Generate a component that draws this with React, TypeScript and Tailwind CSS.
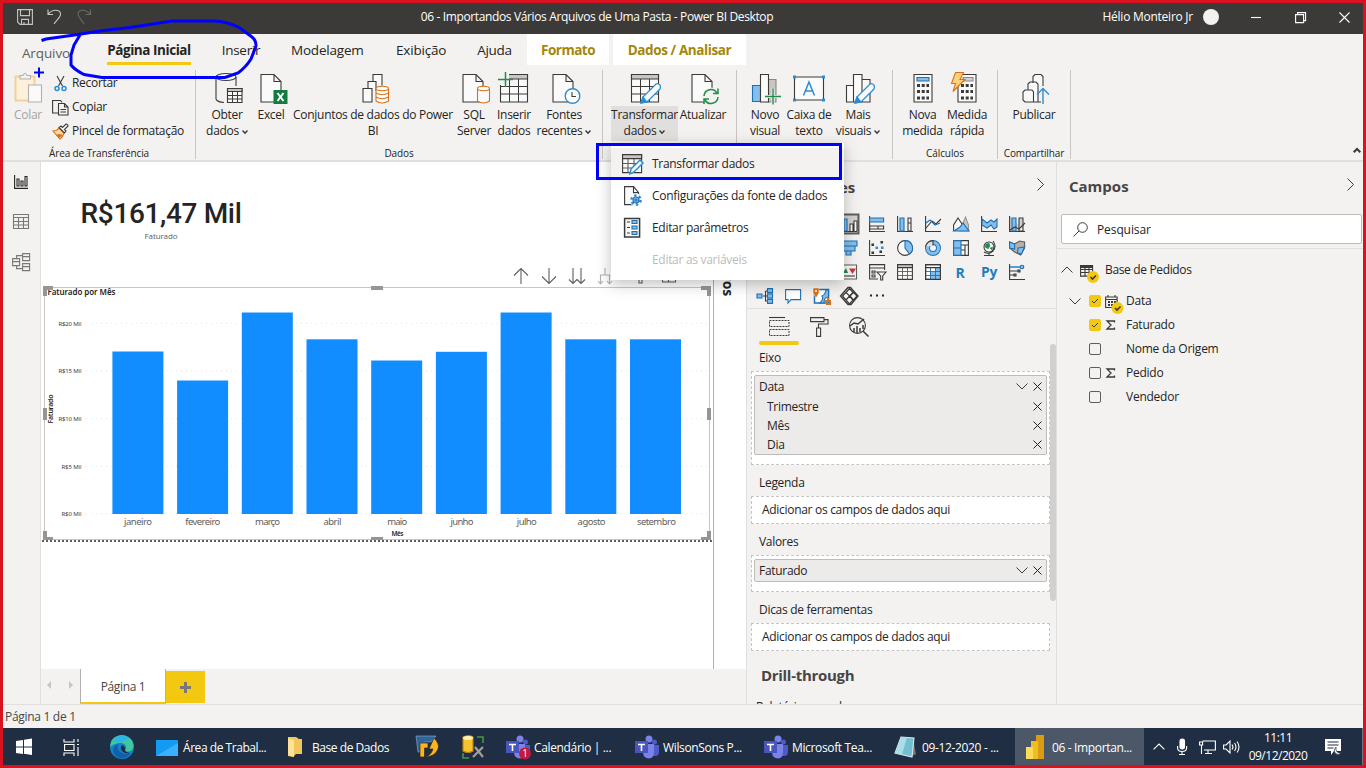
import React from "react";

const INK = "#3b3a39";
const BLUE = "#2a8dd4";
const DEEP = "#1f6fb2";
const FILL = "#83beec";

type SvgProps = { box: string; className: string; children: React.ReactNode };

function Svg({ box, className, children }: SvgProps) {
  return (
    <svg viewBox={box} className={`block shrink-0 overflow-visible ${className}`} fill="none" stroke={INK} strokeWidth={1.1}>
      {children}
    </svg>
  );
}

/* ---------- shared icon parts ---------- */

const FileShape = () => <path d="M3.500 3.500h13l7 7v20.500h-20zM16.500 3.500v7h7" fill="#fafafa" />;
const Pencil = ({ x, y }: { x: number; y: number }) => (
  <g transform={`translate(${x} ${y})`}>
    <path d="M0 20 2 14 15 1q2-1 4 1 1 2 0 4L6 19z" fill="#fafafa" stroke={BLUE} strokeWidth={1.300} />
    <path d="M0 20 2 14 6 19z" fill={BLUE} stroke={BLUE} />
  </g>
);
const Chevron = () => (
  <svg viewBox="0 0 6 6" className="ml-[3px] inline-block size-[6px]" fill="none" stroke={INK} strokeWidth={1.5}>
    <path d="M.5 1.500 3 4.200 5.500 1.500" />
  </svg>
);
const Close = () => (
  <Svg box="0 0 9 9" className="size-[9px]">
    <path d="M.5.5l8 8M8.500.5l-8 8" strokeWidth={1} stroke="#252423" />
  </Svg>
);
const Expand = () => (
  <Svg box="0 0 12 7" className="h-[7px] w-[12px]">
    <path d="M.5.5 6 6 11.500.5" strokeWidth={1} />
  </Svg>
);

/* ---------- ribbon ---------- */

type BigProps = { w: string; label: string[]; menu?: boolean; active?: boolean; faded?: boolean; children: React.ReactNode };

function Big({ w, label, menu, active, faded, children }: BigProps) {
  return (
    <div className={`flex flex-col items-center ${w}`}>
      <Svg box="0 0 34 35" className="h-[35px] w-[34px]">{children}</Svg>
      <div className={`h-[35px] w-full pt-px text-center leading-4 ${active ? "bg-[#e1dfdd]" : ""} ${faded ? "text-[#a6a4a2]" : ""}`}>
        {label.map((l, i) => (
          <div key={l} className="-mx-4 whitespace-nowrap">
            {l}
            {menu && i === label.length - 1 ? <Chevron /> : null}
          </div>
        ))}
      </div>
    </div>
  );
}

function Group({ w, label, pad, children }: { w: string; label: string; pad: string; children: React.ReactNode }) {
  return (
    <section className={`flex h-[89px] shrink-0 flex-col justify-between border-r border-[#c8c6c4] pt-px ${w}`}>
      <div className={`flex ${pad}`}>{children}</div>
      <div className="text-center text-[10px] leading-[11px] tracking-[-0.1px]">{label}</div>
    </section>
  );
}

const Grid = ({ x }: { x: number }) => (
  <g transform={`translate(${x} 0)`}>
    <path d="M3.500 3.500h27v27.500h-27z" fill="#fafafa" />
    <path d="M3.500 3.500h27v4.500h-27z" fill="#c8c6c4" />
    <path d="M3.500 15.500h27M3.500 23h27M12.500 8v23M21.500 8v23" strokeWidth={1} />
  </g>
);

function SmallAction({ label, children }: { label: string; children: React.ReactNode }) {
  return (
    <div className="flex h-6 items-center gap-[3px]">
      <Svg box="0 0 17 17" className="size-[17px]">{children}</Svg>
      <span className="whitespace-nowrap">{label}</span>
    </div>
  );
}

function Ribbon() {
  return (
    <div className="flex h-[97px] border-b-2 border-[#e1dfdd] pt-[5px] text-[12px] tracking-[-0.3px]">
      <Group w="w-[193px]" label="Área de Transferência" pad="pl-[8px]">
        <Big w="w-[34px]" label={["Colar"]} faded>
          <g transform="translate(4 0)">
            <path d="M.5 5.500h19v24H.5z" fill="#fdf1dc" stroke="#f3cf9c" strokeWidth={2} />
            <path d="M5 8V4.500h3Q10 0 12 4.500h3.500V8z" fill="#f3f2f1" stroke="#b3b0ad" />
            <path d="M13.500 14h13v17h-13z" fill="#fafafa" stroke="#b3b0ad" />
          </g>
        </Big>
        <div className="ml-[7px] flex flex-col">
          <SmallAction label="Recortar">
            <path d="M5 1l5.500 10M12 1 6.500 11" />
            <circle cx="5" cy="13.500" r="2" stroke={BLUE} strokeWidth={1.500} /><circle cx="12" cy="13.500" r="2" stroke={BLUE} strokeWidth={1.500} />
          </SmallAction>
          <SmallAction label="Copiar">
            <path d="M6 14H.6V1.500h8l1.500 2M6.500 4.500h6l3.500 3.500v8H6.500zM12.500 4.500V8H16M8.500 10.500H14M8.500 13H14" />
          </SmallAction>
          <SmallAction label="Pincel de formatação">
            <path d="M1 8q4 0 6-3l5 5q-1 4-4 6z" fill="#fbd9a4" stroke="#d8731c" />
            <path d="M4 12l3 3 4-3-4-1z" fill="#d8731c" stroke="none" />
            <path d="M7 4.500 12.500 10l1.500-2-1.500-1.500L16 3q0-2-2-2l-3.500 3.500L9 3z" fill="#fafafa" />
          </SmallAction>
        </div>
      </Group>
      <Group w="w-[407px]" label="Dados" pad="pl-[9px]">
        <Big w="w-[44px]" label={["Obter", "dados"]} menu>
          <path d="M6 6v22q1 3 8 3.500M26 6v9" />
          <ellipse cx="16" cy="6" rx="10" ry="3.500" fill="#fafafa" />
          <path d="M17.500 17.500h14.500v14H17.500z" fill="#fafafa" /><path d="M17.500 17.500h14.500v3H17.500z" fill="#c8c6c4" />
          <path d="M17.500 24.500h14.500M17.500 28h14.500M22.500 20.500v11M27.500 20.500v11" strokeWidth={1} />
        </Big>
        <Big w="w-[44px]" label={["Excel"]}>
          <g transform="translate(3.500 0)"><FileShape /></g>
          <path d="M19.500 19h14v14h-14z" fill="#107c41" stroke="none" />
          <path d="M23.500 22l6 8M29.500 22l-6 8" stroke="#fff" strokeWidth={2} />
        </Big>
        <Big w="w-[160px]" label={["Conjuntos de dados do Power", "BI"]}>
          <path d="M7 31h9V17.500H7zM12 17.500v-7h8V20M17 10.500v-7h9v11" fill="#fafafa" />
          <path d="M20 18v12q6 4 12.500 0V18" fill="#fafafa" stroke="#d8731c" /><ellipse cx="26.200" cy="17.500" rx="6.200" ry="2.200" fill="#fafafa" stroke="#d8731c" />
          <path d="M20 22q6 3.500 12.500 0M20 26q6 3.500 12.500 0" stroke="#d8731c" />
        </Big>
        <Big w="w-[42px]" label={["SQL", "Server"]}>
          <g transform="translate(2.500 0)"><FileShape /></g>
          <path d="M20.500 18v12q6 4 12 0V18" fill="#fafafa" stroke="#d8731c" /><ellipse cx="26.500" cy="17.500" rx="6" ry="2.200" fill="#fafafa" stroke="#d8731c" />
        </Big>
        <Big w="w-[38px]" label={["Inserir", "dados"]}>
          <Grid x={0} />
          <path d="M1 1h11v13H1z" fill="#f3f2f1" stroke="none" />
          <path d="M1 8.500h15M8.500 1v15" stroke="#218d4a" strokeWidth={1.500} />
        </Big>
        <Big w="w-[62px]" label={["Fontes", "recentes"]} menu>
          <g transform="translate(2.500 0)"><FileShape /></g>
          <circle cx="25.500" cy="25" r="7.300" fill="#fff" stroke={BLUE} strokeWidth={1.400} /><path d="M25 21v4.500h4" />
        </Big>
      </Group>
      <Group w="w-[134px]" label="" pad="pl-[8px]">
        <Big w="w-[67px]" label={["Transformar", "dados"]} menu active>
          <Grid x={0} /><Pencil x={13} y={12} />
        </Big>
        <Big w="w-[50px]" label={["Atualizar"]}>
          <g transform="translate(2.500 0)"><FileShape /></g>
          <circle cx="25" cy="25.500" r="9" fill="#f3f2f1" stroke="none" />
          <path d="M18 25a7 7 0 0 1 13-3M32 26a7 7 0 0 1-13 3M32 17.500v5h-5M18 33v-5h5" stroke="#218d4a" strokeWidth={1.500} />
        </Big>
      </Group>
      <Group w="w-[156px]" label="" pad="pl-[7px]">
        <Big w="w-[42px]" label={["Novo", "visual"]}>
          <path d="M4.500 14.500h8v16h-8z" fill={FILL} stroke={DEEP} /><path d="M20 8.500h8V31h-8z" fill="#c8c6c4" stroke="#8a8886" />
          <path d="M12.500 3.500h8V31h-8z" fill="#fafafa" /><path d="M17 25.500h16M25 17.500v16" stroke="#f3f2f1" strokeWidth={3} /><path d="M17 25.500h16M25 17.500v16" stroke="#218d4a" strokeWidth={1.400} />
        </Big>
        <Big w="w-[46px]" label={["Caixa de", "texto"]}>
          <path d="M2.500 6h29v23h-29z" fill="#fafafa" />
          <path d="M1 4.500h3v3H1zM30 4.500h3v3h-3zM1 27.500h3v3H1zM30 27.500h3v3h-3z" fill={BLUE} stroke="none" />
          <path d="M11.500 24.500 17 11l5.500 13.500M13.500 20h7" stroke={BLUE} strokeWidth={1.500} />
        </Big>
        <Big w="w-[52px]" label={["Mais", "visuais"]} menu>
          <path d="M5.500 14.500h7V31h-7zM21 8.500h8V31h-8zM12.500 3.500H21V31h-8.500z" fill="#fafafa" /><Pencil x={14} y={12} />
        </Big>
      </Group>
      <Group w="w-[105px]" label="Cálculos" pad="pl-[8px]">
        <Big w="w-[43px]" label={["Nova", "medida"]}>
          <path d="M8 3.500h18V31H8z" fill="#fafafa" /><path d="M11 6.500h12V10H11z" fill={FILL} stroke={DEEP} />
          <path d="M11 14.500h12M11 20.500h12M11 27h12" strokeWidth={3} strokeDasharray="3 1.700" />
        </Big>
        <Big w="w-[46px]" label={["Medida", "rápida"]}>
          <path d="M8 3.500h18V31H8z" fill="#fafafa" /><path d="M13 6.500h10V10H13z" fill="#d2d0ce" stroke="#8a8886" />
          <path d="M11 14.500h12M11 20.500h12M11 27h12" strokeWidth={3} strokeDasharray="3 1.700" />
          <path d="M5.500 1.500h8L10 8.500h5L3 20.500l2.500-8h-4z" fill="#fbd27c" stroke="#d8731c" />
        </Big>
      </Group>
      <Group w="w-[73px]" label="Compartilhar" pad="pl-[9px]">
        <Big w="w-[54px]" label={["Publicar"]}>
          <path d="M16 12V5.500l2-2h6l2 2V15M24 31h-8M11 19v-6l2-2h6l2 2v18H8l-2-2v-8l2-2h7l1.500 2v10" fill="#fafafa" />
          <path d="M26 33V17.500M20 23.500l6-6 6 6" stroke={BLUE} strokeWidth={1.400} />
        </Big>
      </Group>
      <div className="flex flex-1 items-end justify-end pr-[2px] pb-[7px]">
        <Svg box="0 0 8 5" className="h-[5px] w-[8px]"><path d="M.7 4.300 4 1l3.300 3.300" strokeWidth={2} /></Svg>
      </div>
    </div>
  );
}

function TitleBar() {
  return (
    <header className="flex h-[31px] items-start bg-[#3b3a39] pt-[6px] text-[12px] tracking-[-0.37px] text-white">
      <div className="flex w-[400px] gap-[14px] pl-[14px]">
        <Svg box="0 0 16 16" className="size-4"><path d="M.6.6h14.800v14.800H3L.6 13zM3.500.6v6h9v-6M4.500 15.400v-5h7v5M7 13v2" stroke="#c8c6c4" /></Svg>
        <Svg box="0 0 16 16" className="size-4"><path d="M1 .5v5h5M1 5.500C5 0 13 0 13.500 5c.3 3-3 5-6.500 10" stroke="#c8c6c4" /></Svg>
        <Svg box="0 0 16 16" className="size-4"><path d="M13.500.5v5h-5M13.500 5.500C9 0 1.500 0 1 5c0 3 3 5 6 10" stroke="#6b6967" /></Svg>
      </div>
      <div className="w-[388px] text-center leading-[16px]">06 - Importandos Vários Arquivos de Uma Pasta - Power BI Desktop</div>
      <div className="flex flex-1 items-center justify-end">
        <span className="leading-[16px] tracking-[-0.25px]">Hélio Monteiro Jr</span>
        <span className="ml-[10px] size-4 rounded-full bg-[#f3f2f1]" />
        <Svg box="0 0 10 10" className="ml-[32px] size-[10px]"><path d="M0 5.500h10" stroke="#fff" /></Svg>
        <Svg box="0 0 11 11" className="ml-[34px] size-[11px]"><path d="M.6 2.600h8v8h-8zM2.600 2.600v-2h8v8h-2" stroke="#fff" /></Svg>
        <Svg box="0 0 11 11" className="ml-[33px] mr-[13px] size-[11px]"><path d="M.5.5l10 10M10.500.5l-10 10" stroke="#fff" /></Svg>
      </div>
    </header>
  );
}

function Tabs() {
  return (
    <nav className="flex h-[31px] text-center text-[13.500px] leading-[32px] whitespace-nowrap">
      <span className="ml-[17px] w-[52px] pt-[3px] tracking-[-0.1px] text-[#605e5c]">Arquivo</span>
      <span className="ml-[35px] flex w-[84px] flex-col items-center border-b-[3px] border-[#f2c811] font-bold tracking-[-0.45px]">Página Inicial</span>
      <span className="ml-[30px] w-[40px] tracking-[-0.3px]">Inserir</span>
      <span className="ml-[30px] w-[72px] tracking-[-0.2px]">Modelagem</span>
      <span className="ml-[33px] w-[48px] tracking-[-0.2px]">Exibição</span>
      <span className="ml-[32px] w-[37px] tracking-[-0.3px]">Ajuda</span>
      <span className="ml-[14px] w-[82px] bg-white font-bold tracking-[-0.5px] text-[#a4870a]">Formato</span>
      <span className="ml-[4px] w-[133px] bg-white font-bold tracking-[-0.4px] text-[#a4870a]">Dados / Analisar</span>
    </nav>
  );
}

/* ---------- report canvas ---------- */

const MONTHS = [
  { name: "janeiro", top: 351.5, len: 28 },
  { name: "fevereiro", top: 380.5, len: 35 },
  { name: "março", top: 312.5, len: 25 },
  { name: "abril", top: 339.3, len: 18 },
  { name: "maio", top: 360.5, len: 20 },
  { name: "junho", top: 351.8, len: 23 },
  { name: "julho", top: 312.5, len: 20 },
  { name: "agosto", top: 339.3, len: 28 },
  { name: "setembro", top: 339.3, len: 39 },
];
const TICKS = [
  { t: "R$20 Mil", y: 323.3 }, { t: "R$15 Mil", y: 371 }, { t: "R$10 Mil", y: 418.7 }, { t: "R$5 Mil", y: 466.2 }, { t: "R$0 Mil", y: 513.8 },
];

function Chart() {
  return (
    <svg viewBox="41 285 672 259" className="block h-[259px] w-[672px] font-['Noto_Sans',sans-serif]" fill="#605e5c">
      <path d="M44.500 287.500h665v252h-665z" fill="#fff" stroke="#c8c6c4" />
      <text x="47.500" y="295" fontSize="8" fontWeight="600" fill="#252423" textLength="68">Faturado por Mês</text>
      {TICKS.map(({ t, y }) => (
        <g key={t}>
          <path d={`M86 ${y}h622`} stroke="#e6e4e2" strokeDasharray="1 4" />
          <text x="81.500" y={y + 2.300} fontSize="6" fill="#3b3a39" textAnchor="end" textLength={t.length > 7 ? 23 : 20}>{t}</text>
        </g>
      ))}
      {MONTHS.map((m, i) => (
        <g key={m.name}>
          <rect x={112.400 + i * 64.700} y={m.top} width="51" height={514 - m.top} fill="#118dff" />
          <text x={138 + i * 64.800} y="525" fontSize="9.500" textAnchor="middle" textLength={m.len}>{m.name}</text>
        </g>
      ))}
      <text x="397.500" y="536" fontSize="6.500" fontWeight="600" fill="#252423" textAnchor="middle" textLength="12">Mês</text>
      <text transform="translate(53 409) rotate(-90)" fontSize="7" fontWeight="600" fill="#252423" textAnchor="middle" textLength="29">Faturado</text>
      <path d="M43 286h10v4h-6v6h-4zM701 286h10v10h-4v-6h-6zM43 540v-9h4v6h6v3zM711 540v-9h-4v6h-6v3zM371 286h12v4h-12zM371 537h12v3h-12zM43 408h4v12h-4zM707 408h4v12h-4z" fill="#979593" />
      <path d="M42 541h671" stroke="#605e5c" strokeWidth="2" strokeDasharray="2 2" />
    </svg>
  );
}

function Canvas() {
  return (
    <main className="flex w-[705px] shrink-0 flex-col bg-[#f3f2f1]">
      <div className="flex h-[507px] bg-white">
        <div className="w-[673px] border-r border-[#b3b0ad]">
          <div className="flex h-[105px] w-[240px] flex-col items-center pt-[35px] text-[#252423]">
            <div className="font-['Roboto',sans-serif] text-[28px] leading-[33px] font-medium tracking-[-0.35px] whitespace-nowrap">R$161,47 Mil</div>
            <div className="text-[8px] leading-[11px] tracking-[-0.1px] text-[#605e5c]">Faturado</div>
          </div>
          <div className="flex h-[18px] pl-[472px]">
            <Svg box="513 267 165 18" className="h-[18px] w-[165px]">
              <path d="M521 284v-16M514 275.500l7-7 7 7M549 268v16M542 276.500l7 7 7-7M573 268v16M569 279.500l4 4 4-4M581 268v16M577 279.500l4 4 4-4" stroke="#605e5c" />
              <path d="M605 268v7M600.500 284v-9h9v9M598 281l2.500 3 2.500-3M607 281l2.500 3 2.500-3" stroke="#b3b0ad" />
              <path d="M639 278v5h3v-5M662.500 270v12h13v-12M668.500 270v12" stroke="#605e5c" />
            </Svg>
          </div>
          <Chart />
        </div>
        <div className="flex h-[134px] w-[32px] items-center justify-end pr-[5px] text-[14px] leading-[18px] font-bold text-[#252423] [writing-mode:vertical-rl]">
          Filtros
        </div>
      </div>
      <div className="flex h-[35px] items-stretch">
        <div className="flex w-[39px] justify-between pt-[11px] pr-[7px] pl-[6px]">
          <Svg box="0 0 4 10" className="h-[10px] w-[4px]"><path d="M4 1v8L0 5z" fill="#c8c6c4" stroke="none" /></Svg>
          <Svg box="0 0 4 10" className="h-[10px] w-[4px]"><path d="M0 1v8l4-4z" fill="#c8c6c4" stroke="none" /></Svg>
        </div>
        <div className="w-[86px] border-x border-b-2 border-x-[#b3b0ad] border-b-[#f2c811] bg-white text-center text-[12px] leading-[36px] tracking-[-0.35px] text-[#484644]">Página 1</div>
        <div className="mt-[2px] flex h-[32px] w-[39px] items-center justify-center bg-[#f2c811]">
          <Svg box="0 0 11 11" className="size-[11px]"><path d="M0 5.500h11M5.500 0v11" stroke="#7a7874" strokeWidth={3} /></Svg>
        </div>
      </div>
    </main>
  );
}

function Rail() {
  return (
    <aside className="flex w-[38px] shrink-0 flex-col items-center border-r border-[#e1dfdd] pt-[13px]">
      <Svg box="0 0 14 14" className="mr-px h-[14px] w-[14px]"><path d="M.6 0v13.400H14M3 11V4h2v7zM7 11V6h2v5zM11 11V1.500h2V11z" stroke="#252423" /></Svg>
      <Svg box="0 0 16 15" className="mt-[25px] mr-px h-[15px] w-[16px]"><path d="M.5.5h15v14H.5zM.5 3.500h15M.5 7.500h15M.5 11h15M5.500 3v12M10.500 3v12" stroke="#7a7874" /></Svg>
      <Svg box="0 0 18 18" className="mt-[24px] mr-px size-[18px]"><path d="M.6 5.600h7v7h-7zM.6 8.600h7M10.600.6h7v7h-7zM10.600 3.600h7M10.600 10.600h7v7h-7zM10.600 13.600h7M4.600 5.600v-3h6M4.600 12.600v3h6" stroke="#7a7874" /></Svg>
    </aside>
  );
}

/* ---------- visualizations pane ---------- */

const B = { fill: FILL, stroke: DEEP };
const VISUALS: (React.ReactNode | null)[] = [
  null, null, null,
  <><path d="M-1.500-1.500h19v19h-19z" fill="#d2d0ce" stroke="#605e5c" strokeWidth={2} /><path d="M1 0v15.500h15" /><path d="M9 15V8h3v7M13 15V5h3v10" fill="#fafafa" /><path d="M3 15V3h3v12z" {...B} /></>,
  <><path d="M.6 0v15.500H16" /><path d="M.6 2h14v4h-14z" {...B} /><path d="M.6 10h14v3h-14zM9 10v3" /></>,
  <><path d="M.6 0v15.500H16M11 2h3v13h-3zM11 7h3" /><path d="M3 2h4v13H3z" {...B} /></>,
  <><path d="M.6 0v15.500H16M1 12l6-7 4 3 5-5" /><path d="M1 7l4-3 5 5 5-2" stroke={DEEP} /></>,
  <><path d="M7 15l5.500-14 3 8v6z" fill="#c8c6c4" stroke="#979593" /><path d="M.6 15V9L5 2l6 9" fill="#fafafa" /><path d="M1 15l6-4 3-4 6 8z" {...B} /></>,
  <><path d="M.6 0v15.500H16" /><path d="M1 3l5 4 4-3 3 2 3-3v8l-3 2-3-4-4 3-5-3z" {...B} /></>,
  <><path d="M.6 0v15.500H16M10 2h4v13h-4z" fill="#d2d0ce" /><path d="M3 2h4v13H3z" {...B} /><path d="M1 14l5-3 4 2 6-6" /></>,
  null, null, null,
  <><path d="M0 1h16v5H0zM2 6h12v5H2zM5 11h5v4H5z" {...B} /></>,
  <><path d="M.6 0v15.500H16" /><path d="M3 4h1.500v1.500H3zM12 1.500h1.500V3H12zM3 12h1.500v1.500H3zM11 11h1.500v1.500H11z" fill={INK} /><path d="M7 7h1.500v1.500H7zM12.500 7H14v1.500h-1.500z" fill={FILL} stroke={BLUE} /></>,
  <><circle cx="8" cy="8" r="7.400" fill="#fafafa" /><path d="M8 .6A7.400 7.400 0 0 1 12.500 14L8 8z" {...B} /></>,
  <><circle cx="8" cy="8" r="5.500" stroke={DEEP} strokeWidth={5} /><circle cx="8" cy="8" r="5.500" stroke={FILL} strokeWidth={3.200} /><path d="M.6 7A7.500 7.500 0 0 1 8 .6v5" fill="#e1dfdd" /></>,
  <><path d="M.6.6h14.800v14.800H.6zM8 5h8M8 10h4M12 5v10" fill="#fafafa" /><path d="M.6.6H8v14.800H.6zM.6 8H8" {...B} /></>,
  <><circle cx="8" cy="7" r="5" fill="#fff" /><path d="M5 4l3-1 1 3-2 3-3-2zM9 8l3-1-1 3z" fill="#218d4a" stroke="#218d4a" strokeWidth={.5} /><path d="M12 1q4 5 0 10-4 4-9 1M8 13v2.500M3 15.500h10" /></>,
  <><path d="M.6 2l5 2 5-3 5 1v6l-4 7-6-3-5-4z" fill="#b3b0ad" stroke="#605e5c" /><path d="M.6 2l5 2v5l-5-1zM9 8l6.500-1-3 7-4-1z" {...B} /></>,
  null, null, null,
  <><path d="M0 1h15.500v14H0z" fill="#fafafa" stroke="#605e5c" /><path d="M2 9l3-5 2 5z" fill="#218d4a" stroke="none" /><path d="M9 5h5l-2.500 4z" fill="#d13438" stroke="#d13438" /><path d="M2 12h12" /></>,
  <><path d="M9 15H.6V.6h15V6M.6 4h15M3 7h3v2H3zM3 11h3v2H3z" /><path d="M8 8h9l-3.300 4v4h-2v-4z" fill="#fafafa" /></>,
  <><path d="M.6.6h14.800v14.800H.6z" fill="#fafafa" /><path d="M.6 7.500h15M.6 11.500h15M5.500 3.500v12M10.500 3.500v12" stroke="#605e5c" strokeWidth={.9} /><path d="M.6.6h14.800v3H.6z" fill="#c8c6c4" /></>,
  <><path d="M.6.6h14.800v14.800H.6z" fill="#fff" /><path d="M10 4h5.500v11.500H5V8h5z" fill={FILL} stroke="none" /><path d="M.6 7.500h15M.6 11.500h15M5.500 3.500v12M10.500 3.500v12" stroke={DEEP} strokeWidth={.9} /><path d="M.6.6h14.800v14.800H.6zM.6 3.600h15" /></>,
  <text x="7" y="13.500" textAnchor="middle" fontSize="15" fontWeight="700" fill="#1f7dbd" stroke="none" textLength="9" lengthAdjust="spacingAndGlyphs">R</text>,
  <text x="8" y="12.500" textAnchor="middle" fontSize="14" fontWeight="700" fill="#1f7dbd" stroke="none" textLength="16" lengthAdjust="spacingAndGlyphs">Py</text>,
  <><path d="M.6 0v15.500H16M1 7h8M1 11h5" /><path d="M1 3h10" stroke={BLUE} strokeWidth={1.600} /><circle cx="13" cy="3" r="1.800" {...B} /><path d="M9 6h2v2H9zM5 10h2v2H5z" fill="#979593" /></>,
  <><path d="M6 8h5M8.500 3v10h2.500M8.500 3H11" /><path d="M0 6h5v4H0zM10.500.6h5v4h-5zM10.500 6h5v4h-5zM10.500 11.400h5v4h-5z" {...B} /></>,
  <path d="M.6 1.600h15v10H6l-3 3.500v-3.500H.6z" fill="#fff" stroke={DEEP} />,
  <><path d="M1.500 1.500h14v13.500h-14z" fill="#fff" stroke={DEEP} strokeWidth={1.500} /><path d="M7 15q4-4 2-7 3-1 4-6h2.500v7Q11 9 11 15z" {...B} /><path d="M0 0h6v5l-3 5-3-5z" fill="#d8731c" stroke="#fff" strokeWidth={.5} /><circle cx="3" cy="3" r="1" fill="#fff" stroke="none" /><path d="M12 13h2v3h3v-3h-2v-3" stroke="#d8731c" strokeWidth={2} /></>,
  <><path d="M7-.5h2.500L17 8l-7 8.500H7L-.5 8z" fill="#fafafa" strokeWidth={1.400} /><path d="M8.500.5 5 4.500l3.500 3.500L12 4.500zM12.500 4.500 9 8l3.500 4L16 8zM8.500 8 5 12l3.500 4 3.500-4zM5 4.500 1.500 8 5 12" strokeWidth={1.200} /></>,
  <path d="M1 6.500h2v2H1zM7 6.500h2v2H7zM13 6.500h2v2h-2z" fill="#252423" stroke="none" />,
];

function Field({ name, indent }: { name: string; indent?: boolean }) {
  return (
    <div className={`flex items-center pr-[4px] ${indent ? "h-[19px] pl-[12px]" : "h-[21px] pl-[4px]"}`}>
      <span className="flex-1">{name}</span>
      {indent ? null : <span className="mr-[5px]"><Expand /></span>}
      <Close />
    </div>
  );
}

const WELL = "w-[299px] border border-dashed border-[#c8c6c4] bg-white";

function Visualizations() {
  return (
    <aside className="flex w-[310px] shrink-0 flex-col overflow-hidden border-l border-[#e1dfdd] text-[12px] tracking-[-0.3px] text-[#252423]">
      <div className="flex h-[50px] items-center justify-between pr-[12px] pl-[11px] text-[15px] font-bold text-[#484644]">
        <span className="w-[96px] tracking-[-0.2px]">Visualizações</span>
        <Svg box="0 0 7 13" className="mb-[6px] h-[13px] w-[7px]"><path d="M.5.5l6 6-6 6" strokeWidth={1} /></Svg>
      </div>
      <div className="ml-[4px] grid h-[96px] w-[280px] grid-cols-10 [grid-auto-rows:24px]">
        {VISUALS.map((v, i) => (
          <div key={i} className="flex items-center justify-center">{v ? <Svg box="0 0 16 16" className="size-4">{v}</Svg> : null}</div>
        ))}
      </div>
      <div className="flex h-[38px] border-t border-t-[#e1dfdd] pt-[8px] pl-[22px]">
        <Svg box="0 0 21 20" className="h-[20px] w-[21px]"><path d="M0 .5h16" /><path d="M.5 3.500h19.500v6H.5zM.5 12.500h19.500v6H.5z" strokeDasharray="2 1" strokeWidth={1} /></Svg>
        <Svg box="0 0 19 20" className="ml-[20px] h-[20px] w-[19px]"><path d="M.6.6H14v4H.6zM14 2.600h4V7H8.500v4M6.600 11h4v8.400h-4z" /></Svg>
        <Svg box="0 0 20 20" className="ml-[20px] h-[20px] w-[20px]"><circle cx="8.500" cy="8.500" r="7.900" /><path d="M14 14l5.500 5.500M1 9l4-3 4 1 6-5M5 15v-4M8 16V9M11 15v-4M14 12V8" strokeWidth={1.500} /></Svg>
      </div>
      <div className="flex flex-1">
        <div className="w-[303px] pl-[4px]">
          <div className="ml-[8px] h-[4px] w-[40px] -translate-y-[5px] rounded bg-[#f2c811]" />
          <div className="-mt-[4px] h-[25px] pl-[8px] leading-[23px]">Eixo</div>
          <div className={`h-[94px] px-[2px] py-[3px] ${WELL}`}>
            <div className="rounded-[2px] border border-[#bebbb8] bg-[#edebe9]">
              <Field name="Data" /><Field name="Trimestre" indent /><Field name="Mês" indent /><Field name="Dia" indent />
            </div>
          </div>
          <div className="h-[31px] pl-[8px] leading-[35px]">Legenda</div>
          <div className={`h-[28px] pl-[10px] leading-[26px] ${WELL}`}>Adicionar os campos de dados aqui</div>
          <div className="h-[31px] pl-[8px] leading-[35px]">Valores</div>
          <div className={`h-[37px] px-[2px] py-[3px] ${WELL}`}>
            <div className="rounded-[2px] border border-[#bebbb8] bg-[#edebe9]"><Field name="Faturado" /></div>
          </div>
          <div className="h-[31px] pl-[8px] leading-[35px]">Dicas de ferramentas</div>
          <div className={`h-[28px] pl-[10px] leading-[26px] ${WELL}`}>Adicionar os campos de dados aqui</div>
          <div className="h-[46px] pl-[10px] text-[15px] leading-[48px] font-bold text-[#484644]">Drill-through</div>
          <div className="h-[6px] pl-[5px] leading-[19px] tracking-[-0.35px]">Relatório cruzado</div>
        </div>
        <div className="h-[257px] w-[6px] -translate-y-[2px] rounded-full bg-[#d2d0ce]" />
      </div>
    </aside>
  );
}

/* ---------- fields pane ---------- */

function Badge() {
  return (
    <g>
      <circle cx="13" cy="12" r="6" fill="#f2c811" stroke="none" /><path d="M10.500 12l2 2 3.500-3.500" strokeWidth={1.600} />
    </g>
  );
}

function FieldRow({ name, checked, sigma, date }: { name: string; checked?: boolean; sigma?: boolean; date?: boolean }) {
  return (
    <div className="flex h-6 items-center">
      <span className="flex w-[32px] justify-start pl-[12px]">{date ? <Expand /> : null}</span>
      <Svg box="0 0 12 12" className="size-[12px]">
        <rect x=".5" y=".5" width="11" height="11" rx="1.500" fill={checked ? "#f2c811" : "none"} stroke={checked ? "#f2c811" : "#605e5c"} strokeWidth={1} />
        {checked ? <path d="M3 6l2 2 4-4" strokeWidth={1} /> : null}
      </Svg>
      <span className="flex w-[25px] pl-[4px]">
        {sigma ? <Svg box="0 0 10 10" className="ml-px size-[10px]"><path d="M8.500 2.500V1H1l4 4-4 4h7.500V7.500" strokeWidth={1.300} /></Svg> : null}
        {date ? <Svg box="0 0 18 18" className="mt-[5px] size-[18px]"><path d="M.6 2h11.500v10.500H.6zM.6 4.500h12M3 0v2M10 0v2" /><path d="M3 7h8M3 10h8" strokeDasharray="2 1" strokeWidth={1.800} /><g transform="translate(-.5 1)"><Badge /></g></Svg> : null}
      </span>
      <span>{name}</span>
    </div>
  );
}

function Fields() {
  return (
    <aside className="flex flex-1 flex-col border-l border-[#e1dfdd] text-[12px] tracking-[-0.25px] text-[#252423]">
      <div className="flex h-[52px] items-center justify-between pr-[9px] pl-[12px] text-[15px] font-bold text-[#484644]">
        <span className="mb-[3px] tracking-normal">Campos</span>
        <Svg box="0 0 7 13" className="mb-[8px] h-[13px] w-[7px]"><path d="M.5.5l6 6-6 6" strokeWidth={1} /></Svg>
      </div>
      <div className="ml-[4px] mr-px flex h-[30px] items-center rounded-[2px] border border-[#bebbb8] bg-white pl-[11px]">
        <Svg box="0 0 15 15" className="size-[15px]"><circle cx="9.500" cy="5.500" r="4.800" strokeWidth={1} /><path d="M6 9 .5 14.500" strokeWidth={1} /></Svg>
        <span className="ml-[9px] pt-px leading-[26px] tracking-[-0.1px]">Pesquisar</span>
      </div>
      <div className="mt-[4px] h-px bg-[#e1dfdd]" />
      <div className="flex h-[40px] items-center pl-[4px]">
        <span className="rotate-180 pb-px"><Expand /></span>
        <Svg box="0 0 19 18" className="mt-[9px] ml-[7px] h-[18px] w-[19px]"><path d="M.6.6h12v10.500H.6zM.6 4.500h12M.6 7.500h12M5 2v9M9 2v9" /><path d="M0 0h13v3H0z" fill={INK} stroke="none" /><Badge /></Svg>
        <span className="ml-[6px] pt-px tracking-[-0.35px]">Base de Pedidos</span>
      </div>
      <FieldRow name="Data" checked date />
      <FieldRow name="Faturado" checked sigma />
      <FieldRow name="Nome da Origem" />
      <FieldRow name="Pedido" sigma />
      <FieldRow name="Vendedor" />
    </aside>
  );
}

/* ---------- dropdown menu ---------- */

function MenuRow({ label, active, faded, children }: { label: string; active?: boolean; faded?: boolean; children?: React.ReactNode }) {
  return (
    <div className={`flex h-8 items-center gap-[9px] pl-[11px] ${active ? "bg-[#f3f2f1]" : ""} ${faded ? "text-[#bebbb8]" : ""}`}>
      <Svg box="0 0 21 20" className="-mt-px h-[20px] w-[21px]">{children}</Svg>
      <span>{label}</span>
    </div>
  );
}

function Menu() {
  return (
    <div className="absolute top-[143px] left-[611px] h-[137px] w-[233px] bg-white pt-[5px] text-[12px] tracking-[-0.3px] shadow-[0_4px_14px_rgba(0,0,0,0.25)]">
      <MenuRow label="Transformar dados" active>
        <path d="M.6.6h19v18h-19z" fill="#fafafa" /><path d="M.6.6h19v4h-19z" fill="#c8c6c4" /><path d="M.6 9.500h15M.6 14h10M6 5v14M12 5v8" stroke="#605e5c" /><path d="M8 20l1-5L18 6l3 3-9 9z" fill="#fafafa" stroke={BLUE} strokeWidth={1.500} />
      </MenuRow>
      <MenuRow label="Configurações da fonte de dados">
        <path d="M2.600.6h9l5 6v12h-14zM11.500.6v6h5" fill="#fafafa" /><circle cx="14" cy="14" r="6.500" fill="#fff" stroke="none" /><circle cx="14" cy="14" r="4.600" stroke={BLUE} strokeWidth={2.500} strokeDasharray="2.400 2.400" /><circle cx="14" cy="14" r="3" fill={FILL} stroke={DEEP} /><circle cx="14" cy="14" r="1" fill="#fff" stroke={DEEP} />
      </MenuRow>
      <MenuRow label="Editar parâmetros">
        <path d="M2.600.6h15v18.500h-15z" fill="#fafafa" strokeWidth={1.500} /><path d="M5 4h3M5 9.500h3M5 15h3" /><path d="M10 2.500h5v3h-5zM10 8h5v3h-5zM10 13.500h5v3h-5z" {...B} />
      </MenuRow>
      <MenuRow label="Editar as variáveis" faded />
    </div>
  );
}

/* ---------- taskbar ---------- */

const Teams = ({ badge }: { badge?: boolean }) => (
  <>
    <circle cx="19.500" cy="7" r="2.500" fill="#5059c9" stroke="none" /><circle cx="14" cy="4" r="3.500" fill="#7b83eb" stroke="none" />
    <path d="M16 10h8v7q0 4-4 4h-4z" fill="#5059c9" stroke="none" /><path d="M8 9h11v8q0 6-5 6.500Q8 23 8 17z" fill="#7b83eb" stroke="none" />
    <path d="M0 6h13v12H0z" fill="#4b53bc" stroke="none" /><path d="M3 9.500h7M6.500 9.500V16" stroke="#fff" strokeWidth={1.600} />
    {badge ? <><circle cx="19" cy="18.500" r="6" fill="#c4183c" stroke="none" /><text x="19" y="22.200" fontSize="10" textAnchor="middle" fill="#fff" stroke="none">1</text></> : null}
  </>
);

function Task({ w, label, active, children }: { w: string; label?: string; active?: boolean; children: React.ReactNode }) {
  return (
    <div className={`flex shrink-0 items-center gap-[4px] whitespace-nowrap ${label ? "pl-[9px]" : "justify-center"} ${active ? "bg-[#4c5868]" : ""} ${w}`}>
      <Svg box="0 0 24 24" className="mt-px size-6">{children}</Svg>
      {label ? <span className="pt-[2px] tracking-[-0.35px]">{label}</span> : null}
    </div>
  );
}

function Taskbar() {
  return (
    <footer className="flex h-[37px] bg-[#1f2e42] text-[12px] text-white">
      <Task w="w-[42px]"><path d="M4 6l7-1v6.500H4zM12 4.800l8-1.300v8h-8zM4 12.500h7V19l-7-1zM12 12.500h8V20l-8-1.300z" fill="#fff" stroke="none" /></Task>
      <Task w="w-[54px]"><path d="M4 4v3h10V4M4.600 9.500h9.400v6H4.600zM4 21v-3h10v3M18 4v3M18 12v9M17 9.500h2" stroke="#fff" /></Task>
      <Task w="w-[46px]">
        <circle cx="12" cy="12" r="12" fill="#1583c9" stroke="none" /><path d="M1 7C5-2 19-2 23 8c2 7-3 10-8 8 3-4 0-8-4-8C6 8 2 10 0 12z" fill="#41c7a0" stroke="none" /><path d="M3 6Q10-3 19 3L10 8z" fill="#2fb4e8" stroke="none" /><path d="M9 9c-4 4 1 12 12 9-4 6-12 7-16 2-4-5-1-10 4-11z" fill="#1260ad" stroke="none" /><path d="M12 10q-3 3 1 7 4 2 7 1-5-1-5-3 1-3-3-5z" fill="#1f2e42" stroke="none" />
      </Task>
      <div className="flex w-[131px] items-center gap-[5px] pl-[11px]"><Svg box="0 0 22 16" className="mt-[3px] h-4 w-[22px]"><path d="M0 0h22v16H0z" fill="#139bf2" stroke="none" /><path d="M0 16 22 3v13z" fill="#38b2ff" stroke="none" /></Svg><span className="-mr-2 pt-[2px] tracking-[-0.45px] whitespace-nowrap">Área de Trabal...</span></div>
      <div className="flex w-[128px] items-center gap-[10px] pl-[12px]"><Svg box="0 0 14 20" className="mt-px h-5 w-[14px]"><path d="M0 0h8l3 2h3v15H8l-3 3-5-1z" fill="#f3c65b" stroke="none" /><path d="M0 1l6 2v17l-6-2z" fill="#ffe29a" stroke="none" /></Svg><span className="pt-[2px] tracking-[-0.45px] whitespace-nowrap">Base de Dados</span></div>
      <Task w="w-[46px]"><path d="M1 1h20l-5 6H9v10H3z" fill="#2f6598" stroke="#8eb4d2" strokeWidth={.6} /><path d="M5 22V8h8v5H9.500v9zM9 22q7-1 9-8h-4l5-11q6 6 4 11-3 8-14 8z" fill="#fcb61d" stroke="#2b2a26" strokeWidth={.7} /></Task>
      <Task w="w-[47px]"><path d="M1 2q6-3 10 0v14q-5 3-10 0z" fill="#f5c32c" stroke="#b98507" /><ellipse cx="6" cy="3" rx="5" ry="2" fill="#fff2be" stroke="none" /><path d="M15 2h6v6M1 18v5h6" stroke="#3f9c43" strokeWidth={1.600} /><path d="M11 22 21 12M13 12l8 10" stroke="#a19f9d" strokeWidth={2.200} /></Task>
      <Task w="w-[129px]" label="Calendário | ..."><Teams badge /></Task>
      <Task w="w-[129px]" label="WilsonSons P..."><Teams /></Task>
      <Task w="w-[130px]" label="Microsoft Tea..."><Teams /></Task>
      <Task w="w-[130px]" label="09-12-2020 - ..."><path d="M19 4l3 15-6 3z" fill="#777" stroke="none" /><path d="M7 2l13 1-2 19L1 18z" fill="#73bfd0" stroke="#d7e8ec" /><path d="M7 2l6 .500L8 19.500 1 18z" fill="#a9dde8" stroke="none" /></Task>
      <Task w="w-[129px]" label="06 - Importan..." active><path d="M12 0h8v24h-8z" fill="#d99c12" stroke="none" /><path d="M7 6h7v18H7z" fill="#efbd25" stroke="none" /><path d="M2 12h7v12H2z" fill="#fbdb58" stroke="none" /></Task>
      <div className="flex flex-1 items-center pl-[9px]">
        <Svg box="0 0 12 7" className="h-[7px] w-[12px]"><path d="M.6 6.400 6 1l5.400 5.400" stroke="#fff" /></Svg>
        <Svg box="0 0 10 16" className="mt-px ml-[12px] h-4 w-[10px]"><rect x="3" y="0" width="4.500" height="10" rx="2.200" fill="#fff" stroke="#fff" /><path d="M.6 7v2q0 3.500 4.500 3.500T9.600 9V7M5 12v3.500M2 15.500h6" stroke="#fff" /></Svg>
        <Svg box="0 0 17 16" className="mt-px ml-[12px] h-4 w-[17px]"><path d="M3.500 2h12.900v9H5M9 11v4M6 14.500h7M.6 3h3v3h-3zM2.500 6v9" stroke="#fff" /></Svg>
        <Svg box="0 0 17 14" className="mt-px ml-[7px] h-[14px] w-[17px]"><path d="M.6 5h2.500L7 1v12L3 9H.6zM9 4.500q2 2.500 0 5M11.500 3q3 4 0 8M14 1.500q4 5.500 0 11" stroke="#fff" /></Svg>
        <div className="ml-[7px] w-[62px] pt-px text-center leading-[18px] tracking-[-0.5px] whitespace-nowrap"><div>11:11</div><div>09/12/2020</div></div>
        <Svg box="0 0 17 16" className="mt-px ml-[16px] h-4 w-[17px]"><path d="M0 0h16v12H9l-3 4v-4H0z" fill="#fff" stroke="none" /><path d="M2.500 3h11M2.500 6h11M2.500 9h6" stroke="#1f2e42" /><path d="M11 8q-1 6 5 6-3 3-6 0-2-3 1-6z" fill="#fff" stroke="#1f2e42" strokeWidth={.7} /></Svg>
        <span className="ml-auto h-full w-px bg-[#6b7787]" />
      </div>
    </footer>
  );
}

/* ---------- pen strokes drawn over the window ---------- */

function Annotations() {
  return (
    <>
      <svg viewBox="0 0 280 90" className="pointer-events-none absolute top-0 left-0 h-[90px] w-[280px]" fill="none" stroke="#0000ff" strokeWidth="3">
        <path d="M41.500 40.500 46 39 78 34.500 100 31 130 27.500 172 21H215Q229 22 240 28L252 37Q256 40 256 46L251 59Q246 67 238 73L225 77.500H102L84 74.500Q75 70 71 65V55L74 45 80 35" />
        <path d="M34 72.500h10M39 67.500v10" strokeWidth="2" />
      </svg>
      <div className="pointer-events-none absolute top-[143px] left-[596px] h-[37px] w-[246px] border-[3px] border-[#0000ff]" />
    </>
  );
}

export default function App() {
  return (
    <div className="relative h-[768px] w-[1366px] overflow-hidden border-[3px] border-[#d9121f] bg-[#f3f2f1] font-['Open_Sans','Noto_Sans',sans-serif] text-[#252423]">
      <TitleBar />
      <Tabs />
      <Ribbon />
      <div className="flex h-[542px]">
        <Rail />
        <Canvas />
        <Visualizations />
        <Fields />
      </div>
      <div className="h-[24px] border-t border-[#e1dfdd] pl-[2px] text-[12px] leading-[23px] tracking-[-0.3px] text-[#484644]">Página 1 de 1</div>
      <Taskbar />
      <div className="absolute -top-[3px] -left-[3px] h-0 w-0">
        <Menu />
        <Annotations />
      </div>
    </div>
  );
}
